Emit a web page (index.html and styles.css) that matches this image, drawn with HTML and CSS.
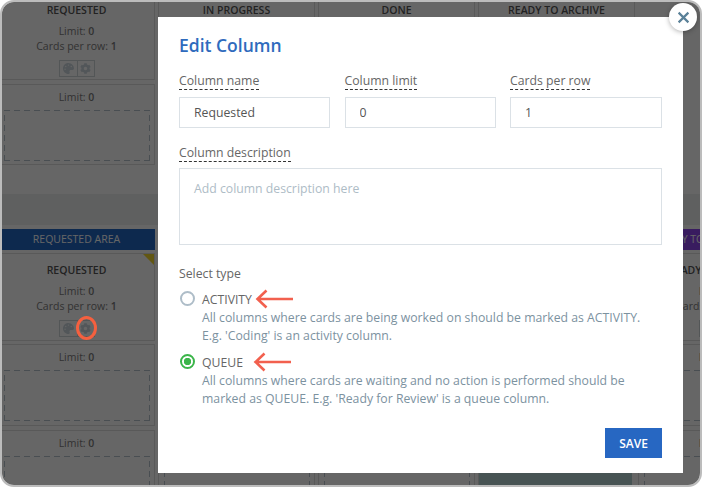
FILE: index.html
```html
<!DOCTYPE html>
<html lang="en">
<head>
<meta charset="utf-8">
<title>Edit Column</title>
<link rel="stylesheet" href="styles.css">
</head>
<body>
<svg class="sprites" width="0" height="0" aria-hidden="true">
  <symbol id="palette" viewBox="0 0 512 512"><path d="M204.3 5C104.9 24.4 24.8 104.3 5.2 203.4c-37 187 131.7 326.4 258.8 306.7 41.2-6.4 61.4-54.6 42.5-91.7-23.1-45.4 9.9-98.4 60.9-98.4h79.7c35.8 0 64.8-29.6 64.9-65.3C511.5 97.1 368.1-26.9 204.3 5zM96 320c-17.7 0-32-14.3-32-32s14.3-32 32-32 32 14.3 32 32-14.3 32-32 32zm32-128c-17.7 0-32-14.3-32-32s14.3-32 32-32 32 14.3 32 32-14.3 32-32 32zm128-64c-17.7 0-32-14.3-32-32s14.3-32 32-32 32 14.3 32 32-14.3 32-32 32zm128 64c-17.7 0-32-14.3-32-32s14.3-32 32-32 32 14.3 32 32-14.3 32-32 32z"/></symbol>
  <symbol id="gear" viewBox="0 0 512 512"><path d="M487.4 315.7l-42.6-24.6c4.3-23.2 4.3-47 0-70.2l42.6-24.6c4.9-2.8 7.1-8.6 5.5-14-11.1-35.6-30-67.8-54.7-94.6-3.8-4.1-10-5.1-14.8-2.3L380.8 110c-17.9-15.4-38.5-27.3-60.8-35.1V25.8c0-5.6-3.9-10.5-9.4-11.7-36.7-8.2-74.3-7.8-109.2 0-5.5 1.2-9.4 6.1-9.4 11.7V75c-22.2 7.9-42.8 19.8-60.8 35.1L88.7 85.5c-4.9-2.8-11-1.9-14.8 2.3-24.7 26.7-43.6 58.9-54.7 94.6-1.7 5.4.6 11.2 5.5 14L67.3 221c-4.3 23.2-4.3 47 0 70.2l-42.6 24.6c-4.9 2.8-7.1 8.6-5.5 14 11.1 35.6 30 67.8 54.7 94.6 3.8 4.1 10 5.1 14.8 2.3l42.6-24.6c17.9 15.4 38.5 27.3 60.8 35.1v49.2c0 5.6 3.9 10.5 9.4 11.7 36.7 8.2 74.3 7.8 109.2 0 5.5-1.2 9.4-6.1 9.4-11.7v-49.2c22.2-7.9 42.8-19.8 60.8-35.1l42.6 24.6c4.9 2.8 11 1.9 14.8-2.3 24.7-26.7 43.6-58.9 54.7-94.6 1.5-5.5-.7-11.3-5.6-14.1zM256 336c-44.1 0-80-35.9-80-80s35.9-80 80-80 80 35.9 80 80-35.9 80-80 80z"/></symbol>
</svg>
<div class="frame">
  <div class="board">
    <section class="lane lane-top">
      <div class="row row-head">
        <div class="col-card"><h3>REQUESTED</h3><p>Limit: <b>0</b></p><p>Cards per row: <b>1</b></p><div class="tools"><span class="tool"><svg><use href="#palette"/></svg></span><span class="tool"><svg><use href="#gear"/></svg></span></div></div>
        <div class="col-card"><h3>IN PROGRESS</h3></div>
        <div class="col-card"><h3>DONE</h3></div>
        <div class="col-card"><h3>READY TO ARCHIVE</h3></div>
      </div>
      <div class="row row-slot-tall">
        <div class="slot"><p>Limit: <b>0</b></p><div class="drop"></div></div>
        <div class="slot"></div>
        <div class="slot"></div>
        <div class="slot"></div>
      </div>
    </section>
    <div class="band"></div>
    <section class="lane lane-low">
      <div class="row row-area">
        <div class="area area-blue">REQUESTED AREA</div>
        <div class="area area-blue"></div>
        <div class="area area-blue"></div>
        <div class="area area-blue"></div>
        <div class="area area-purple">READY TO ARCHIVE AREA</div>
      </div>
      <div class="row row-head-low">
        <div class="col-card flagged"><h3>REQUESTED</h3><p>Limit: <b>0</b></p><p>Cards per row: <b>1</b></p><div class="tools"><span class="tool"><svg><use href="#palette"/></svg></span><span class="tool"><svg><use href="#gear"/></svg></span></div></div>
        <div class="col-card"></div>
        <div class="col-card"></div>
        <div class="col-card"></div>
        <div class="col-card"><h3>READY TO ARCHIVE</h3><p>Limit: <b>0</b></p><p>Cards per row: <b>1</b></p><div class="tools"><span class="tool"><svg><use href="#palette"/></svg></span><span class="tool"><svg><use href="#gear"/></svg></span></div></div>
      </div>
      <div class="row row-slot">
        <div class="slot"><p>Limit: <b>0</b></p><div class="drop"></div></div>
        <div class="slot slot-bare"><div class="drop"></div></div>
        <div class="slot slot-bare"><div class="drop"></div></div>
        <div class="slot slot-bare"><div class="drop"></div></div>
        <div class="slot"><p>Limit: <b>0</b></p><div class="drop"></div></div>
      </div>
      <div class="row row-slot">
        <div class="slot"><p>Limit: <b>0</b></p><div class="drop"></div></div>
        <div class="slot slot-bare"><div class="drop"></div></div>
        <div class="slot slot-bare"><div class="drop"></div></div>
        <div class="slot slot-teal"></div>
        <div class="slot"><p>Limit: <b>0</b></p><div class="drop"></div></div>
      </div>
    </section>
  </div>
  <div class="overlay"></div>
  <i class="ring"></i>
  <div class="modal">
    <button class="close" type="button" aria-label="Close"><svg viewBox="0 0 12 12"><path d="M1.5 1.5l9 9M10.5 1.5l-9 9"/></svg></button>
    <h2>Edit Column</h2>
    <div class="fields">
      <label class="field"><span class="hint">Column name</span><input type="text" value="Requested"></label>
      <label class="field"><span class="hint">Column limit</span><input type="text" value="0"></label>
      <label class="field"><span class="hint">Cards per row</span><input type="text" value="1"></label>
    </div>
    <label class="field field-wide"><span class="hint">Column description</span><textarea placeholder="Add column description here"></textarea></label>
    <div class="type-title">Select type</div>
    <div class="option">
      <div class="option-head">
        <input type="radio" name="type">
        <span class="option-name">ACTIVITY</span>
        <svg class="arrow" viewBox="0 0 38 20"><path d="M38 10H2.5M11.5 1.5L2.5 10l9 8.5"/></svg>
      </div>
      <p>All columns where cards are being worked on should be marked as ACTIVITY.<br>E.g. 'Coding' is an activity column.</p>
    </div>
    <div class="option">
      <div class="option-head">
        <input type="radio" name="type" checked>
        <span class="option-name">QUEUE</span>
        <svg class="arrow arrow-far" viewBox="0 0 38 20"><path d="M38 10H2.5M11.5 1.5L2.5 10l9 8.5"/></svg>
      </div>
      <p>All columns where cards are waiting and no action is performed should be<br>marked as QUEUE. E.g. 'Ready for Review' is a queue column.</p>
    </div>
    <div class="actions"><button class="save" type="button">SAVE</button></div>
  </div>
</div>
</body>
</html>
```
FILE: styles.css
```css
* { box-sizing: border-box; }
html, body { margin: 0; padding: 0; background: #fff; }
body { font-family: "Open Sans", sans-serif; }
.sprites { position: absolute; }

.frame {
  position: relative;
  width: 702px;
  height: 487px;
  border: 2px solid #bcbcbc;
  border-radius: 14px;
  overflow: hidden;
  background: #fff;
}
.board { margin-left: -4px; width: 820px; color: #7d7d7d; }
.row { display: grid; grid-template-columns: repeat(5, 157px); column-gap: 3px; }
.lane-top { height: 192px; display: flow-root; }
.band { height: 31px; background: #eef1f1; }
.lane-low { padding-top: 4px; }

.col-card, .slot { border: 1px solid #dfdfdf; text-align: center; background: #fff; }
.row-head { margin-top: -2px; height: 80px; margin-bottom: 4px; }
.row-slot-tall { height: 81px; }
.row-area { height: 21px; }
.row-head-low { height: 88px; margin-top: 3px; margin-bottom: 3px; }
.row-slot { height: 82px; margin-bottom: 4px; }

h3 { margin: 0; font-size: 10.5px; font-weight: 600; line-height: 14px; color: #555; }
.col-card h3 { padding-top: 2px; }
.row-head-low h3 { padding-top: 9px; }
.col-card p, .slot p { margin: 0; font-size: 10.5px; line-height: 15px; }
.col-card p b, .slot p b { font-weight: 600; }
.col-card h3 + p { margin-top: 7px; }

.tools { display: flex; width: fit-content; margin: 6px auto 0; border: 1px solid #d0d6da; }
.tool { display: flex; width: 17px; height: 15px; align-items: center; justify-content: center; }
.tool + .tool { border-left: 1px solid #d0d6da; }
.tool svg { width: 11px; height: 11px; fill: #cdd8df; }

.slot { padding-top: 5px; }
.slot-bare { padding-top: 20px; }
.drop {
  margin: 5px 4px 0 5px;
  height: 51px;
  background-image:
    repeating-linear-gradient(90deg, #b6c4ce 0 6px, transparent 6px 10px),
    repeating-linear-gradient(90deg, #b6c4ce 0 6px, transparent 6px 10px),
    repeating-linear-gradient(0deg, #b6c4ce 0 6px, transparent 6px 10px),
    repeating-linear-gradient(0deg, #b6c4ce 0 6px, transparent 6px 10px);
  background-size: 100% 1px, 100% 1px, 1px 100%, 1px 100%;
  background-position: 0 0, 0 100%, 0 0, 100% 0;
  background-repeat: no-repeat;
}
.slot-teal { background: #b4d2d2; border-right: 3px solid #fff; }

.area { font-size: 10.5px; line-height: 21px; text-align: center; color: #fff; white-space: nowrap; }
.area-blue { background: #2167c4; }
.area-purple { background: #8f46ee; }

.overlay { position: absolute; inset: -2px; background: rgba(0, 0, 0, 0.6); }
.flagged { position: relative; }
.flagged::after {
  content: "";
  position: absolute;
  top: 0;
  right: 0;
  border-top: 11px solid #f6d930;
  border-left: 11px solid transparent;
}
.ring {
  position: absolute;
  left: 74px;
  top: 314px;
  width: 21px;
  height: 24px;
  border: 3px solid #f5603f;
  border-radius: 50%;
}

.modal {
  position: absolute;
  left: 156px;
  top: 15px;
  width: 525px;
  height: 456px;
  padding: 16px 21px 0;
  background: #fff;
}
.close {
  position: absolute;
  right: -14px;
  top: -14px;
  width: 28px;
  height: 28px;
  padding: 0;
  border: 0;
  border-radius: 50%;
  background: #fff;
  box-shadow: 0 1px 5px rgba(0, 0, 0, 0.3);
  display: flex;
  align-items: center;
  justify-content: center;
}
.close svg { width: 13px; height: 13px; fill: none; stroke: #5a8198; stroke-width: 2; }
h2 { margin: 0 0 11px; font-size: 17.5px; line-height: 24px; font-weight: 600; color: #2f6bbd; }
.fields { display: grid; grid-template-columns: 151px 151px 1fr; column-gap: 14.5px; }
.field { display: block; }
.hint {
  display: inline-block;
  font-size: 12.25px;
  line-height: 17px;
  color: #666;
  border-bottom: 1px dashed #333;
  margin-bottom: 7px;
}
.field input, .field textarea {
  display: block;
  width: 100%;
  border: 1px solid #dbe1e6;
  font-family: inherit;
  font-size: 12.25px;
  color: #555;
  outline: 0;
  border-radius: 0;
}
.field input { height: 31px; padding: 0 14px; }
.field-wide { margin-top: 12px; }
.field-wide .hint { margin-bottom: 6px; }
.field textarea { height: 77px; padding: 11px 14px; resize: none; }
.field textarea::placeholder { color: #aebcc6; opacity: 1; }
.type-title { margin-top: 21px; font-size: 12.25px; line-height: 16px; color: #666; }
.option { margin-top: 7px; }
.option-head { display: flex; align-items: center; height: 20px; }
.option-head input {
  appearance: none;
  margin: -2px 7px 0 1px;
  width: 15px;
  height: 15px;
  border: 2px solid #aebdc8;
  border-radius: 50%;
  background: #fff;
}
.option-head input:checked { border-color: #3bb54a; background: radial-gradient(circle, #3bb54a 0 3.4px, #fff 4px); }
.option-name { font-size: 12.25px; color: #666; }
.arrow { width: 38px; height: 20px; margin-left: 3px; fill: none; stroke: #f2604e; stroke-width: 2.6; }
.arrow-far { margin-left: 10px; }
.option p { margin: 0 0 0 23px; font-size: 12.25px; line-height: 18px; color: #7c929f; white-space: nowrap; }
.actions { position: absolute; right: 21px; bottom: 15px; }
.save {
  display: block;
  width: 57px;
  height: 30px;
  padding: 0;
  border: 0;
  background: #2767c2;
  color: #fff;
  font-family: inherit;
  font-size: 12px;
  font-weight: 600;
}
```
